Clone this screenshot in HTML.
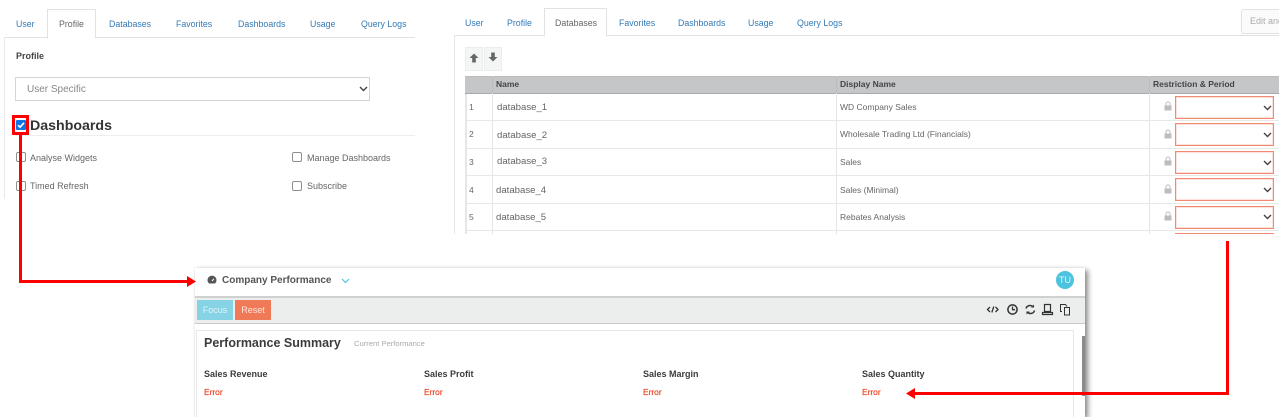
<!DOCTYPE html>
<html>
<head>
<meta charset="utf-8">
<style>
html,body{margin:0;padding:0;background:#fff}
#p{position:relative;width:1279px;height:417px;overflow:hidden;background:#fff;font-family:"Liberation Sans",sans-serif;color:#666;filter:blur(.35px)}
#p div{position:absolute;white-space:nowrap}
.tab{font-size:8.8px;color:#337ab7;line-height:12px}
.act{color:#666}
.cb{width:8px;height:8px;border:1px solid #8f8f8f;border-radius:2px;background:#fff}
.lb{font-size:9px;color:#666;line-height:12px}
.rs{left:1175px;width:97px;height:21px;border:1px solid #f08a70;box-shadow:0 0 0 .5px #f8c4b6 inset}
.hl{background:#e8e8e8;height:1px}
.num{left:469px;font-size:8.5px;line-height:12px;color:#666}
.db{font-size:9.6px;line-height:12px;color:#666}
.dn{left:840px;font-size:8.5px;line-height:12px;color:#666}
.wh{font-size:9px;font-weight:bold;color:#333;line-height:12px}
.th{font-size:8.5px;font-weight:bold;color:#444;line-height:12px}
.er{font-size:8.4px;color:#e8401f;line-height:12px;-webkit-text-stroke:.15px #e8401f}
.r{background:#f00}
svg{position:absolute;display:block}
</style>
</head>
<body>
<div id="p">

<!-- LEFT PANEL -->
<div style="left:4px;top:37px;width:411px;height:1px;background:#e2e2e2"></div>
<div style="left:4px;top:37px;width:1px;height:162px;background:#e8e8e8"></div>
<div style="left:47px;top:9px;width:47px;height:28px;border:1px solid #e2e2e2;border-bottom:1px solid #fff;background:#fff"></div>
<div class="tab" style="left:16px;top:18px">User</div>
<div class="tab act" style="left:59px;top:18px">Profile</div>
<div class="tab" style="left:109px;top:18px">Databases</div>
<div class="tab" style="left:176px;top:18px">Favorites</div>
<div class="tab" style="left:238px;top:18px">Dashboards</div>
<div class="tab" style="left:310px;top:18px">Usage</div>
<div class="tab" style="left:361px;top:18px">Query Logs</div>

<div style="left:16px;top:50px;font-size:9px;font-weight:bold;color:#444;line-height:12px">Profile</div>
<div style="left:15px;top:77px;width:353px;height:22px;border:1px solid #d4d4d4"></div>
<div style="left:27px;top:84px;font-size:10px;color:#888;line-height:12px">User Specific</div>
<svg style="left:359px;top:86px" width="9" height="6"><path d="M1 1l3.500 3.500L8 1" fill="none" stroke="#444" stroke-width="1.400"/></svg>

<div style="left:30px;top:117px;font-size:14.200px;font-weight:bold;color:#333;line-height:18px">Dashboards</div>
<div style="left:15px;top:135px;width:400px;height:1px;background:#eee"></div>
<div style="left:12px;top:115px;width:11px;height:14px;border:3px solid #f00"></div>
<div style="left:16px;top:120px;width:10px;height:10px;background:#0f74e4;border-radius:1px"></div>
<svg style="left:16px;top:120px" width="10" height="10"><path d="M2 5.200l2 2L8 2.800" fill="none" stroke="#fff" stroke-width="1.600"/></svg>

<div class="cb" style="left:16px;top:152px"></div>
<div class="lb" style="left:30px;top:152px">Analyse Widgets</div>
<div class="cb" style="left:16px;top:181px"></div>
<div class="lb" style="left:30px;top:180px">Timed Refresh</div>
<div class="cb" style="left:292px;top:152px"></div>
<div class="lb" style="left:307px;top:152px">Manage Dashboards</div>
<div class="cb" style="left:292px;top:181px"></div>
<div class="lb" style="left:307px;top:180px">Subscribe</div>

<!-- RIGHT PANEL -->
<div style="left:454px;top:35px;width:825px;height:1px;background:#e2e2e2"></div>
<div style="left:454px;top:35px;width:1px;height:199px;background:#e8e8e8"></div>
<div style="left:544px;top:8px;width:61px;height:27px;border:1px solid #e2e2e2;border-bottom:1px solid #fff;background:#fff"></div>
<div class="tab" style="left:465px;top:17px">User</div>
<div class="tab" style="left:507px;top:17px">Profile</div>
<div class="tab act" style="left:555px;top:17px">Databases</div>
<div class="tab" style="left:619px;top:17px">Favorites</div>
<div class="tab" style="left:678px;top:17px">Dashboards</div>
<div class="tab" style="left:748px;top:17px">Usage</div>
<div class="tab" style="left:797px;top:17px">Query Logs</div>
<div style="left:1241px;top:9px;width:50px;height:23px;border:1px solid #e2e2e2;border-radius:3px;background:#fbfbfb"></div>
<div style="left:1250px;top:15px;font-size:9px;color:#aaa;line-height:12px">Edit and</div>

<div style="left:465px;top:47px;width:16px;height:22px;background:#f4f5f5;border:1px solid #ececec"></div>
<div style="left:484px;top:47px;width:16px;height:22px;background:#f4f5f5;border:1px solid #ececec"></div>
<svg style="left:469px;top:53px" width="10" height="10"><path d="M5 .5L.5 5h2.700v4.500h3.600V5H9.500z" fill="#666"/></svg>
<svg style="left:488px;top:52px" width="10" height="10"><path d="M5 9.500L.5 5h2.700V.5h3.600V5H9.500z" fill="#666"/></svg>

<!-- table -->
<div style="left:465px;top:76px;width:814px;height:18px;background:#c5c6c8;border-top:1px solid #bbbcbe;border-bottom:1px solid #a8a9ab;box-sizing:border-box"></div>
<div style="left:465px;top:94px;width:2px;height:140px;background:#e6e6e6"></div>
<div style="left:492px;top:76px;width:1px;height:158px;background:#e4e4e4"></div>
<div style="left:836px;top:76px;width:1px;height:158px;background:#e4e4e4"></div>
<div style="left:1149px;top:76px;width:1px;height:158px;background:#e4e4e4"></div>
<div style="left:492px;top:77px;width:1px;height:16px;background:#bbbcbe"></div>
<div style="left:836px;top:77px;width:1px;height:16px;background:#bbbcbe"></div>
<div style="left:1149px;top:77px;width:1px;height:16px;background:#bbbcbe"></div>
<div class="hl" style="left:465px;top:120px;width:814px"></div>
<div class="hl" style="left:465px;top:148px;width:814px"></div>
<div class="hl" style="left:465px;top:175px;width:814px"></div>
<div class="hl" style="left:465px;top:203px;width:814px"></div>
<div class="hl" style="left:465px;top:230px;width:814px"></div>

<div class="th" style="left:496px;top:78px">Name</div>
<div class="th" style="left:840px;top:78px">Display Name</div>
<div class="th" style="left:1153px;top:78px">Restriction &amp; Period</div>

<div class="num" style="top:101px">1</div>
<div class="num" style="top:128px">2</div>
<div class="num" style="top:156px">3</div>
<div class="num" style="top:184px">4</div>
<div class="num" style="top:211px">5</div>

<div class="db" style="left:497px;top:102px">database_1</div>
<div class="db" style="left:497px;top:130px">database_2</div>
<div class="db" style="left:497px;top:156px">database_3</div>
<div class="db" style="left:496px;top:185px">database_4</div>
<div class="db" style="left:496px;top:212px">database_5</div>

<div class="dn" style="top:101px">WD Company Sales</div>
<div class="dn" style="top:128px">Wholesale Trading Ltd (Financials)</div>
<div class="dn" style="top:156px">Sales</div>
<div class="dn" style="top:184px">Sales (Minimal)</div>
<div class="dn" style="top:211px">Rebates Analysis</div>

<svg style="left:1164px;top:101px" width="8" height="10"><path d="M2 4.500V3a2 2 0 0 1 4 0v1.500" fill="none" stroke="#bdbdbd" stroke-width="1"/><rect x=".5" y="4.500" width="7" height="5" fill="#bdbdbd"/></svg>
<svg style="left:1164px;top:129px" width="8" height="10"><path d="M2 4.500V3a2 2 0 0 1 4 0v1.500" fill="none" stroke="#bdbdbd" stroke-width="1"/><rect x=".5" y="4.500" width="7" height="5" fill="#bdbdbd"/></svg>
<svg style="left:1164px;top:156px" width="8" height="10"><path d="M2 4.500V3a2 2 0 0 1 4 0v1.500" fill="none" stroke="#bdbdbd" stroke-width="1"/><rect x=".5" y="4.500" width="7" height="5" fill="#bdbdbd"/></svg>
<svg style="left:1164px;top:184px" width="8" height="10"><path d="M2 4.500V3a2 2 0 0 1 4 0v1.500" fill="none" stroke="#bdbdbd" stroke-width="1"/><rect x=".5" y="4.500" width="7" height="5" fill="#bdbdbd"/></svg>
<svg style="left:1164px;top:211px" width="8" height="10"><path d="M2 4.500V3a2 2 0 0 1 4 0v1.500" fill="none" stroke="#bdbdbd" stroke-width="1"/><rect x=".5" y="4.500" width="7" height="5" fill="#bdbdbd"/></svg>

<div class="rs" style="top:96px"></div>
<div class="rs" style="top:123px"></div>
<div class="rs" style="top:151px"></div>
<div class="rs" style="top:178px"></div>
<div class="rs" style="top:206px"></div>
<div style="left:1175px;top:233px;width:99px;height:1px;background:#f08a70"></div>
<svg style="left:1263px;top:105px" width="9" height="6"><path d="M1 1l3.500 3.500L8 1" fill="none" stroke="#444" stroke-width="1.400"/></svg>
<svg style="left:1263px;top:132px" width="9" height="6"><path d="M1 1l3.500 3.500L8 1" fill="none" stroke="#444" stroke-width="1.400"/></svg>
<svg style="left:1263px;top:160px" width="9" height="6"><path d="M1 1l3.500 3.500L8 1" fill="none" stroke="#444" stroke-width="1.400"/></svg>
<svg style="left:1263px;top:187px" width="9" height="6"><path d="M1 1l3.500 3.500L8 1" fill="none" stroke="#444" stroke-width="1.400"/></svg>
<svg style="left:1263px;top:214px" width="9" height="6"><path d="M1 1l3.500 3.500L8 1" fill="none" stroke="#444" stroke-width="1.400"/></svg>

<!-- BOTTOM PANEL -->
<div style="left:195px;top:268px;width:890px;height:149px;background:#fff;box-shadow:3px 2px 5px rgba(0,0,0,.45),0 0 2px rgba(0,0,0,.08)"></div>
<div style="left:195px;top:296px;width:890px;height:28px;background:#eceeed;border-top:2px solid #cfd0d0;border-bottom:1px solid #c8c9c9;box-sizing:border-box"></div>
<svg style="left:207px;top:275px" width="10" height="9"><path d="M2 8.500a4.500 4.500 0 1 1 6 0z" fill="#555"/><path d="M5 6l2-2.200" stroke="#fff" stroke-width="1"/></svg>
<div style="left:222px;top:274px;font-size:10px;font-weight:bold;color:#555;line-height:14px">Company Performance</div>
<svg style="left:341px;top:278px" width="9" height="6"><path d="M1 1l3.500 3.500L8 1" fill="none" stroke="#56c3de" stroke-width="1.200"/></svg>
<div style="left:1056px;top:271px;width:18px;height:18px;border-radius:50%;background:#4cc3df;color:#e4f6fb;font-size:9px;line-height:18px;text-align:center">TU</div>

<div style="left:197px;top:300px;width:36px;height:20px;background:#86d3e6;color:#dff3f8;font-size:9px;line-height:21px;text-align:center">Focus</div>
<div style="left:235px;top:300px;width:36px;height:20px;background:#f07a58;color:#fde6df;font-size:9px;line-height:21px;text-align:center">Reset</div>

<svg style="left:986px;top:303px" width="88" height="13" fill="none" stroke="#333" stroke-width="1.300">
<path d="M4 4L1.500 6.500 4 9M9.500 4L12 6.500 9.500 9M7.800 3.500L5.800 9.500"/>
<circle cx="26.500" cy="6.500" r="4.600" stroke-width="1.500"/><path d="M26.500 3.500v3.200h2.600"/>
<path d="M40 5.500a4 4 0 0 1 7-1.500M48.500 7.500a4 4 0 0 1-7 1.500" stroke-width="1.500"/><path d="M48 1.500v3h-3zM40.500 11.500v-3h3z" fill="#333" stroke="none"/>
<path d="M58.500 1.500h6v7h-6zM56.500 9.500h10v2h-10z" stroke-width="1.200"/>
<path d="M76 8.500h-1.500v-7h5l1.500 2M78.500 4.500h5v7.500h-5z" stroke-width="1"/>
</svg>

<div style="left:196px;top:330px;width:876px;height:87px;border:1px solid #e8e8e8;border-bottom:0;background:#fff"></div>
<div style="left:1082px;top:336px;width:3px;height:60px;background:#8b8b8b"></div>
<div style="left:204px;top:335px;font-size:12.500px;font-weight:bold;color:#3c3c3c;line-height:16px">Performance Summary</div>
<div style="left:354px;top:338px;font-size:7.600px;color:#aaa;line-height:12px">Current Performance</div>

<div class="wh" style="left:204px;top:368px;color:#3c3c3c">Sales Revenue</div>
<div class="wh" style="left:424px;top:368px;color:#3c3c3c">Sales Profit</div>
<div class="wh" style="left:643px;top:368px;color:#3c3c3c">Sales Margin</div>
<div class="wh" style="left:862px;top:368px;color:#3c3c3c">Sales Quantity</div>
<div class="er" style="left:204px;top:386px">Error</div>
<div class="er" style="left:424px;top:386px">Error</div>
<div class="er" style="left:643px;top:386px">Error</div>
<div class="er" style="left:862px;top:386px">Error</div>

<!-- RED ARROWS -->
<div class="r" style="left:19px;top:135px;width:3px;height:148px"></div>
<div class="r" style="left:19px;top:280px;width:170px;height:3px"></div>
<svg style="left:187px;top:276px" width="9" height="11"><path d="M0 0l9 5.500L0 11z" fill="#f00"/></svg>
<div class="r" style="left:1226px;top:241px;width:3px;height:154px"></div>
<div class="r" style="left:914px;top:392px;width:315px;height:3px"></div>
<svg style="left:906px;top:388px" width="9" height="11"><path d="M9 0L0 5.500 9 11z" fill="#f00"/></svg>

</div>
</body>
</html>
